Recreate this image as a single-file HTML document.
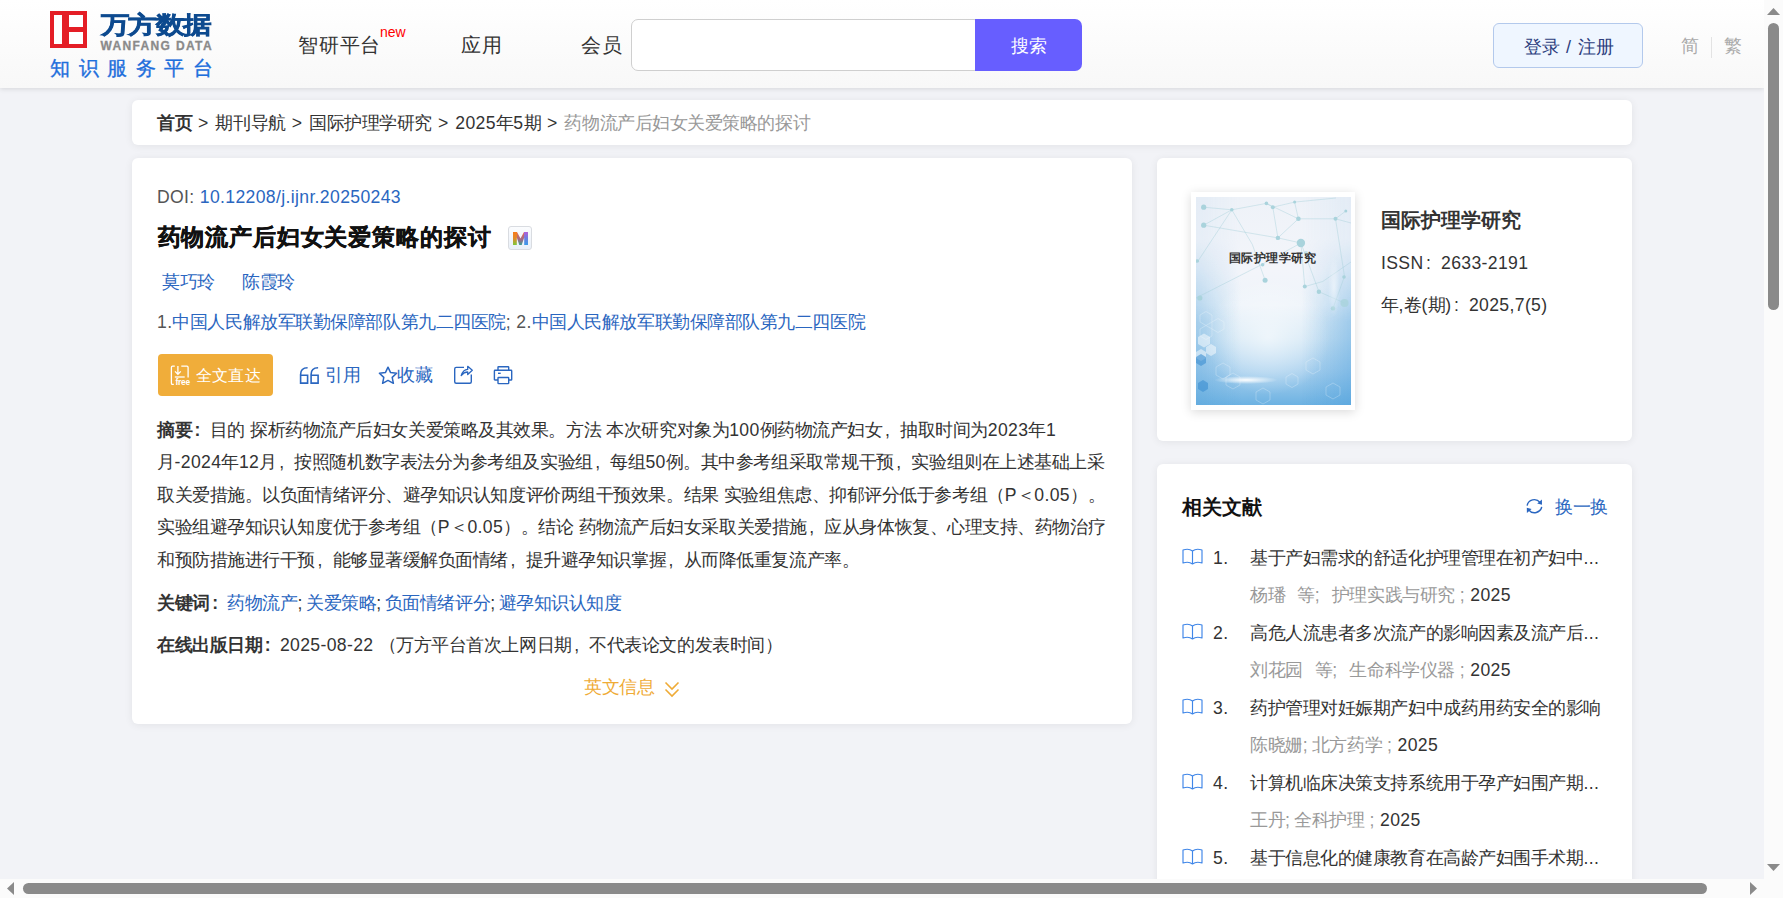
<!DOCTYPE html>
<html><head><meta charset="utf-8"><style>
*{margin:0;padding:0;box-sizing:border-box}
html,body{width:1783px;height:898px;overflow:hidden}
body{font-family:"Liberation Sans",sans-serif;background:#f2f3f7;position:relative;color:#333}
.a{position:absolute;white-space:nowrap}
.t{font-size:17.6px;line-height:22px;letter-spacing:-0.45px}
.l{letter-spacing:0.35px}
.fc{display:inline-block;width:17.6px;padding-left:2.5px;letter-spacing:0}
#hdr{position:absolute;left:0;top:0;width:1764px;height:88px;background:linear-gradient(#ffffff,#f8f8f8);box-shadow:0 1px 5px rgba(0,0,0,0.12);z-index:2}
.card{position:absolute;background:#fff;border-radius:6px;box-shadow:0 1px 8px rgba(0,0,0,0.07)}
.blue{color:#2a66c0}
.grey{color:#999}
#vs{position:absolute;left:1764px;top:0;width:19px;height:879px;background:#fbfbfb;z-index:5}
#hs{position:absolute;left:0;top:879px;width:1783px;height:19px;background:#fbfbfb;z-index:5}
.thumb{position:absolute;background:#8a8a8a;border-radius:6px}
</style></head><body>
<div id="hdr">
<div class="a" style="left:50px;top:11px;width:37px;height:37px;background:#e41e26">
<div class="a" style="left:4px;top:4px;width:8px;height:29px;background:#fff"></div>
<div class="a" style="left:19px;top:4px;width:14px;height:12px;background:#fff"></div>
<div class="a" style="left:19px;top:21px;width:14px;height:12px;background:#fff"></div></div>
<div class="a" style="left:100.5px;top:11px;font-size:28px;line-height:34px;font-weight:bold;color:#0d4a8f;letter-spacing:-0.5px;-webkit-text-stroke:0.7px #0d4a8f;transform:scaleY(0.84);transform-origin:0 0">万方数据</div>
<div class="a" style="left:100.5px;top:38.5px;font-size:12px;line-height:14px;font-weight:bold;color:#8a8a8a;letter-spacing:1.35px;-webkit-text-stroke:0.3px #8a8a8a">WANFANG DATA</div>
<div class="a" style="left:50px;top:56px;font-size:20px;line-height:24px;color:#1e6fdc;letter-spacing:8.5px;-webkit-text-stroke:0.35px #1e6fdc">知识服务平台</div>
<div class="a" style="left:298px;top:34px;font-size:20px;line-height:22px;color:#333;letter-spacing:0.8px">智研平台</div>
<div class="a" style="left:380px;top:24px;font-size:14px;line-height:16px;color:#f00">new</div>
<div class="a" style="left:461px;top:34px;font-size:20px;line-height:22px;color:#333;letter-spacing:0.8px">应用</div>
<div class="a" style="left:581px;top:34px;font-size:20px;line-height:22px;color:#333;letter-spacing:0.8px">会员</div>
<div class="a" style="left:631px;top:19px;width:350px;height:52px;border:1px solid #cfcfcf;border-radius:7px;background:#fff"></div>
<div class="a" style="left:975px;top:19px;width:107px;height:52px;background:#675eff;border-radius:0 7px 7px 0"></div>
<div class="a" style="left:1011px;top:36px;font-size:18px;line-height:20px;color:#fff">搜索</div>
<div class="a" style="left:1493px;top:23px;width:150px;height:45px;border:1px solid #b3c9ec;border-radius:6px;background:#eff6ff"></div>
<div class="a" style="left:1524px;top:37px;font-size:18px;line-height:20px;color:#2d3e7e">登录<span style="letter-spacing:1px"> / </span>注册</div>
<div class="a" style="left:1681px;top:36px;font-size:18px;line-height:20px;color:#aaa">简</div>
<div class="a" style="left:1711px;top:37px;width:1px;height:21px;background:#e3e3e3"></div>
<div class="a" style="left:1724px;top:36px;font-size:18px;line-height:20px;color:#aaa">繁</div>
</div>
<div class="card" style="left:132px;top:100px;width:1500px;height:45px"></div>
<div class="a t" style="left:157px;top:112px;color:#333"><b>首页</b><span style="letter-spacing:1.1px"> &gt; </span>期刊导航<span style="letter-spacing:1.1px"> &gt; </span>国际护理学研究<span style="letter-spacing:1.1px"> &gt; </span><span class="l">2025</span>年<span class="l">5</span>期<span style="letter-spacing:1.1px"> &gt; </span><span style="color:#999">药物流产后妇女关爱策略的探讨</span></div>
<div class="card" style="left:132px;top:158px;width:1000px;height:566px"></div>
<div class="card" style="left:1157px;top:158px;width:475px;height:283px"></div>
<div class="card" style="left:1157px;top:464px;width:475px;height:500px"></div>
<div class="a t" style="left:157px;top:186px;color:#555"><span class="l">DOI: </span><span class="blue"><span class="l">10.12208/j.ijnr.20250243</span></span></div>
<div class="a" style="left:157.5px;top:224px;font-size:23px;line-height:26px;font-weight:bold;color:#111;letter-spacing:0.85px;-webkit-text-stroke:0.35px #111">药物流产后妇女关爱策略的探讨</div>
<div class="a" style="left:508px;top:226px;width:24px;height:24px;border:1.5px solid #d9dce1;border-radius:3px;background:linear-gradient(#fbfcfe,#eaf0f8)">
<svg class="a" style="left:3.5px;top:4.5px" width="15" height="13" viewBox="0 0 15 13">
<defs><clipPath id="mc"><path d="M0,0 H4 L7.5,6.5 L11,0 H15 V13 H11.2 V5.5 L8.7,13 H6.3 L3.8,5.5 V13 H0 Z"/></clipPath>
<linearGradient id="ml" x1="0" y1="0" x2="0" y2="1"><stop offset="0" stop-color="#f77a1a"/><stop offset="0.5" stop-color="#e08a2a"/><stop offset="1" stop-color="#7cc83a"/></linearGradient>
<linearGradient id="mm" x1="0" y1="0" x2="0" y2="1"><stop offset="0" stop-color="#ee6a4a"/><stop offset="0.6" stop-color="#9a6a8a"/><stop offset="1" stop-color="#3f9f90"/></linearGradient>
<linearGradient id="mr" x1="0" y1="0" x2="0" y2="1"><stop offset="0" stop-color="#b25fd8"/><stop offset="0.5" stop-color="#6a7fe0"/><stop offset="1" stop-color="#3a9ae8"/></linearGradient></defs>
<g clip-path="url(#mc)"><rect x="0" y="0" width="4" height="13" fill="url(#ml)"/><rect x="4" y="0" width="7" height="13" fill="url(#mm)"/><rect x="11" y="0" width="4" height="13" fill="url(#mr)"/></g>
</svg></div>
<div class="a t blue" style="left:162px;top:271px">莫巧玲</div>
<div class="a t blue" style="left:242px;top:271px">陈霞玲</div>
<div class="a t" style="left:157px;top:311px;color:#555"><span class="l">1.</span><span class="blue">中国人民解放军联勤保障部队第九二四医院</span><span class="l">; 2.</span><span class="blue">中国人民解放军联勤保障部队第九二四医院</span></div>
<div class="a" style="left:158px;top:354px;width:115px;height:42px;background:#f0ad3a;border-radius:4px"></div>
<svg class="a" style="left:160px;top:355.5px" width="36" height="35" viewBox="0 0 36 35">
<path d="M14.8,10.2 H12.6 Q11.4,10.2 11.4,11.4 V27.2 Q11.4,28.4 12.6,28.4 H13.8" fill="none" stroke="#fff" stroke-width="1.3"/>
<path d="M17.9,10 V18.3 M15,15.4 L17.9,18.3 L20.8,15.4" fill="none" stroke="#fff" stroke-width="1.3"/>
<path d="M21.3,10.2 H26.9 Q28.1,10.2 28.1,11.4 V21.5" fill="none" stroke="#fff" stroke-width="1.3"/>
<path d="M14.8,21 H24.7" stroke="#fff" stroke-width="1.3"/>
<text x="15.4" y="29.2" font-size="8.3" font-family="Liberation Sans" font-weight="bold" fill="#fff" letter-spacing="-0.2">free</text></svg>
<div class="a" style="left:195.5px;top:366px;font-size:16px;line-height:20px;color:#fff;letter-spacing:0.4px">全文直达</div>
<svg class="a" style="left:299px;top:366px" width="21" height="19" viewBox="0 0 21 19"><path d="M8.6,1.8 C4,1.8 1.6,3.8 1.6,8.5 V17.1 H8.6 V9.3 H1.6 M19.1,1.8 C14.5,1.8 12.1,3.8 12.1,8.5 V17.1 H19.1 V9.3 H12.1" fill="none" stroke="#2a66c0" stroke-width="1.6"/></svg>
<div class="a t" style="left:325px;top:364px;color:#2a66c0">引用</div>
<svg class="a" style="left:378px;top:366px" width="20" height="19" viewBox="0 0 20 19">
<path d="M10,1.2 L12.6,6.6 L18.6,7.3 L14.2,11.4 L15.4,17.3 L10,14.4 L4.6,17.3 L5.8,11.4 L1.4,7.3 L7.4,6.6 Z" fill="none" stroke="#2a66c0" stroke-width="1.5" stroke-linejoin="round"/></svg>
<div class="a t" style="left:397px;top:364px;color:#2a66c0">收藏</div>
<svg class="a" style="left:453px;top:365px" width="21" height="20" viewBox="0 0 21 20">
<path d="M11,2.4 H3.2 Q1.7,2.4 1.7,3.9 V16.8 Q1.7,18.3 3.2,18.3 H16.8 Q18.3,18.3 18.3,16.8 V9.5" fill="none" stroke="#2a66c0" stroke-width="1.4"/>
<path d="M8.2,10.6 C9.5,6.5 11.5,4.6 14.7,4.4 V1.3 L19.3,5.3 L14.7,9.5 V7 C12,7 10,8.3 8.2,10.6 Z" fill="none" stroke="#2a66c0" stroke-width="1.3" stroke-linejoin="round"/></svg>
<svg class="a" style="left:492px;top:365px" width="22" height="20" viewBox="0 0 22 20">
<path d="M6,5.3 V2.3 Q6,1.7 6.6,1.7 H16.1 Q16.7,1.7 16.7,2.3 V5.3" fill="none" stroke="#2a66c0" stroke-width="1.4"/>
<path d="M6,15 H3 Q2.4,15 2.4,14.4 V5.9 Q2.4,5.3 3,5.3 H19.1 Q19.7,5.3 19.7,5.9 V14.4 Q19.7,15 19.1,15 H16.7" fill="none" stroke="#2a66c0" stroke-width="1.4"/>
<rect x="6" y="12.5" width="10.7" height="6.1" rx="0.6" fill="none" stroke="#2a66c0" stroke-width="1.4"/>
<path d="M6,8.3 H8.7" stroke="#2a66c0" stroke-width="1.4"/></svg>
<div class="a t" style="left:157px;top:419.0px;color:#333"><b>摘要<span class="fc">:</span></b>目的<span class="l"> </span>探析药物流产后妇女关爱策略及其效果。方法<span class="l"> </span>本次研究对象为<span class="l">100</span>例药物流产妇女<span class="fc">,</span>抽取时间为<span class="l">2023</span>年<span class="l">1</span></div>
<div class="a t" style="left:157px;top:451.4px;color:#333">月<span class="l">-2024</span>年<span class="l">12</span>月<span class="fc">,</span>按照随机数字表法分为参考组及实验组<span class="fc">,</span>每组<span class="l">50</span>例。其中参考组采取常规干预<span class="fc">,</span>实验组则在上述基础上采</div>
<div class="a t" style="left:157px;top:483.8px;color:#333">取关爱措施。以负面情绪评分、避孕知识认知度评价两组干预效果。结果<span class="l"> </span>实验组焦虑、抑郁评分低于参考组（<span class="l">P</span>＜<span class="l">0.05</span>）。</div>
<div class="a t" style="left:157px;top:516.2px;color:#333">实验组避孕知识认知度优于参考组（<span class="l">P</span>＜<span class="l">0.05</span>）。结论<span class="l"> </span>药物流产后妇女采取关爱措施<span class="fc">,</span>应从身体恢复、心理支持、药物治疗</div>
<div class="a t" style="left:157px;top:548.6px;color:#333">和预防措施进行干预<span class="fc">,</span>能够显著缓解负面情绪<span class="fc">,</span>提升避孕知识掌握<span class="fc">,</span>从而降低重复流产率。</div>
<div class="a t" style="left:157px;top:592px;color:#333"><b>关键词<span class="fc">:</span></b><span class="blue">药物流产</span><span style="letter-spacing:-0.6px">; </span><span class="blue">关爱策略</span><span style="letter-spacing:-0.6px">; </span><span class="blue">负面情绪评分</span><span style="letter-spacing:-0.6px">; </span><span class="blue">避孕知识认知度</span></div>
<div class="a t" style="left:157px;top:634px;color:#333"><b>在线出版日期<span class="fc">:</span></b><span class="l">2025-08-22 </span>（万方平台首次上网日期<span class="fc">,</span>不代表论文的发表时间）</div>
<div class="a t" style="left:584px;top:676px;color:#efab36">英文信息</div>
<svg class="a" style="left:664px;top:681px" width="16" height="17" viewBox="0 0 16 17">
<path d="M1.5,1.5 L8,8 L14.5,1.5 M1.5,8.5 L8,15 L14.5,8.5" fill="none" stroke="#efab36" stroke-width="1.6"/></svg>
<div class="a" style="left:1191px;top:192px;width:164px;height:218px;background:#fff;box-shadow:0 2px 10px rgba(0,0,0,0.15)"></div>
<div class="a" style="left:1196px;top:197px;width:155px;height:208px;overflow:hidden;background:linear-gradient(180deg,#eef2f8 0%,#f3f5fa 35%,#eef4fa 52%,#d3e7f5 68%,#a8d0ee 84%,#6db2e2 100%)">
<svg class="a" style="left:0;top:0" width="155" height="208" viewBox="0 0 155 208">
<defs>
<radialGradient id="cg" cx="0.5" cy="0.5" r="0.5"><stop offset="0" stop-color="#ffffff" stop-opacity="0.6"/><stop offset="1" stop-color="#ffffff" stop-opacity="0"/></radialGradient>
<linearGradient id="cr" x1="0" y1="0" x2="1" y2="0"><stop offset="0" stop-color="#4d9fdc" stop-opacity="0"/><stop offset="1" stop-color="#4d9fdc" stop-opacity="0.45"/></linearGradient>
<linearGradient id="cl" x1="0" y1="0" x2="1" y2="0"><stop offset="0" stop-color="#5aa6dc" stop-opacity="0.45"/><stop offset="1" stop-color="#5aa6dc" stop-opacity="0"/></linearGradient>
<linearGradient id="vg" x1="0" y1="0" x2="0" y2="1"><stop offset="0.2" stop-color="#fff" stop-opacity="0.15"/><stop offset="0.6" stop-color="#fff" stop-opacity="1"/></linearGradient>
<radialGradient id="gl" cx="0.5" cy="0.5" r="0.5"><stop offset="0" stop-color="#ffffff" stop-opacity="1"/><stop offset="1" stop-color="#ffffff" stop-opacity="0"/></radialGradient>
</defs>
<mask id="mk"><rect x="0" y="0" width="155" height="208" fill="url(#vg)"/></mask>
<g mask="url(#mk)"><rect x="0" y="0" width="45" height="208" fill="url(#cl)"/><rect x="105" y="0" width="50" height="208" fill="url(#cr)"/></g>
<ellipse cx="72" cy="140" rx="62" ry="58" fill="url(#cg)"/>
<g stroke="#a3cfd9" stroke-width="0.6" fill="none" opacity="0.7">
<path d="M7.7,10.2 L35.8,12.8 L70.4,6.4 L76.8,10.2 L98.6,5.1 L140,1 M7.7,28.2 L35.8,12.8 L56.3,47.4 M7.7,28.2 L81.9,40.9 L104.9,46 M102.4,21.8 L139.5,21.8 L155,26 M102.4,21.8 L81.9,40.9 M70.4,6.4 L102.4,21.8 L98.6,5.1 M0,101 L65.3,67.8 L104.9,46 L108.8,89.6 L126.7,84.5 L155,65 M139.5,21.8 L148.5,79.4 L137,111.4 M104.9,46 L122.9,94.7 M76.8,10.2 L81.9,40.9 M35.8,12.8 L2,64 M56.3,47.4 L69.1,83.2 M122.9,94.7 L148.5,106 M139.5,21.8 L149.8,14"/>
</g>
<g fill="#a9d3dc">
<circle cx="7.7" cy="10.2" r="2.6"/><circle cx="7.7" cy="28.2" r="2.6"/><circle cx="35.8" cy="12.8" r="1.8"/><circle cx="70.4" cy="6.4" r="1.8"/><circle cx="76.8" cy="10.2" r="2"/><circle cx="98.6" cy="5.1" r="1.5"/><circle cx="102.4" cy="21.8" r="2.3"/><circle cx="81.9" cy="40.9" r="2.2"/><circle cx="104.9" cy="46" r="4.2"/><circle cx="139.5" cy="21.8" r="2"/><circle cx="148.5" cy="106" r="4" opacity="0.8"/><circle cx="137" cy="111.4" r="2.2"/><circle cx="122.9" cy="94.7" r="2.2"/><circle cx="108.8" cy="89.6" r="2"/><circle cx="69.1" cy="83.2" r="2.5"/><circle cx="3.8" cy="101" r="2.6"/><circle cx="1.3" cy="64" r="1.8"/><circle cx="66.6" cy="67.8" r="1.8"/><circle cx="149.8" cy="14" r="1.5"/><circle cx="148" cy="80" r="1.8"/><circle cx="110" cy="56" r="2" opacity="0.6"/>
</g>
<g stroke="#ffffff" stroke-width="0.7" fill="none" opacity="0.35">
<path d="M4,118 l6,-3.5 6,3.5 0,7 -6,3.5 -6,-3.5z M16,125 l6,-3.5 6,3.5 0,7 -6,3.5 -6,-3.5z M4,132 l6,-3.5 6,3.5 0,7 -6,3.5 -6,-3.5z M20,170 l7,-4 7,4 0,8 -7,4 -7,-4z M30,180 l7,-4 7,4 0,8 -7,4 -7,-4z M110,165 l7,-4 7,4 0,8 -7,4 -7,-4z M90,180 l6,-3.5 6,3.5 0,7 -6,3.5 -6,-3.5z M130,190 l7,-4 7,4 0,8 -7,4 -7,-4z M60,195 l7,-4 7,4 0,8 -7,4 -7,-4z"/>
</g>
<g fill="#ffffff" opacity="0.5">
<path d="M2,140 l6,-3.5 6,3.5 0,7 -6,3.5 -6,-3.5z"/><path d="M10,150 l5,-3 5,3 0,6 -5,3 -5,-3z"/><path d="M0,155 l5,-3 5,3 0,6 -5,3 -5,-3z"/>
</g>
<g fill="#3c8fd2" opacity="0.6"><path d="M0,160 l5,-3 5,3 0,6 -5,3 -5,-3z"/><path d="M2,186 l5,-3 5,3 0,6 -5,3 -5,-3z"/></g>
<ellipse cx="50" cy="183" rx="32" ry="4" fill="url(#gl)"/>
<ellipse cx="138" cy="90" rx="6" ry="30" fill="url(#gl)" opacity="0.5"/>
</svg>
<div class="a" style="left:33px;top:54px;font-size:12px;line-height:14px;font-weight:bold;color:#333;letter-spacing:0.45px">国际护理学研究</div></div>
<div class="a" style="left:1381px;top:209px;font-size:20px;line-height:22px;font-weight:bold;color:#333">国际护理学研究</div>
<div class="a t" style="left:1381px;top:252px;color:#333"><span class="l">ISSN</span><span class="fc">:</span><span class="l">2633-2191</span></div>
<div class="a t" style="left:1381px;top:294px;color:#333">年<span class="l">,</span>卷<span class="l">(</span>期<span class="l">)</span><span class="fc">:</span><span class="l">2025,7(5)</span></div>
<div class="a" style="left:1182px;top:496px;font-size:20px;line-height:22px;font-weight:bold;color:#111">相关文献</div>
<svg class="a" style="left:1525px;top:497px" width="19" height="19" viewBox="0 0 19 19">
<path d="M2.1,8.6 A7.3,7.3 0 0 1 15,5.4 M16.7,9.8 A7.3,7.3 0 0 1 3.8,13" fill="none" stroke="#2a66c0" stroke-width="1.4"/>
<path d="M16.9,2.6 L17,7.8 L12.2,6.6 Z M1.9,16 L1.8,10.8 L6.6,12 Z" fill="#2a66c0"/></svg>
<div class="a t" style="left:1555px;top:496px;color:#2a66c0">换一换</div>
<svg class="a" style="left:1182px;top:548px" width="21" height="17" viewBox="0 0 21 17"><path d="M10.5,3 C8,1 4,1 1,2 V15 C4,14 8,14 10.5,16 C13,14 17,14 20,15 V2 C17,1 13,1 10.5,3 Z M10.5,3 V16" fill="none" stroke="#3f86e8" stroke-width="1.15" stroke-linejoin="round"/></svg>
<div class="a t" style="left:1213px;top:547px;color:#333"><span class="l">1.</span></div>
<div class="a t" style="left:1250px;top:547px;color:#333">基于产妇需求的舒适化护理管理在初产妇中<span class="l">...</span></div>
<div class="a t" style="left:1250px;top:584px;color:#333"><span class="grey">杨璠</span><span class="grey" style="margin-left:12px">等<span class="l">;</span></span><span class="grey" style="margin-left:12px">护理实践与研究</span><span class="grey" style="margin-left:5px"><span class="l">;</span></span><span class="l"> 2025</span></div>
<svg class="a" style="left:1182px;top:623px" width="21" height="17" viewBox="0 0 21 17"><path d="M10.5,3 C8,1 4,1 1,2 V15 C4,14 8,14 10.5,16 C13,14 17,14 20,15 V2 C17,1 13,1 10.5,3 Z M10.5,3 V16" fill="none" stroke="#3f86e8" stroke-width="1.15" stroke-linejoin="round"/></svg>
<div class="a t" style="left:1213px;top:622px;color:#333"><span class="l">2.</span></div>
<div class="a t" style="left:1250px;top:622px;color:#333">高危人流患者多次流产的影响因素及流产后<span class="l">...</span></div>
<div class="a t" style="left:1250px;top:659px;color:#333"><span class="grey">刘花园</span><span class="grey" style="margin-left:12px">等<span class="l">;</span></span><span class="grey" style="margin-left:12px">生命科学仪器</span><span class="grey" style="margin-left:5px"><span class="l">;</span></span><span class="l"> 2025</span></div>
<svg class="a" style="left:1182px;top:698px" width="21" height="17" viewBox="0 0 21 17"><path d="M10.5,3 C8,1 4,1 1,2 V15 C4,14 8,14 10.5,16 C13,14 17,14 20,15 V2 C17,1 13,1 10.5,3 Z M10.5,3 V16" fill="none" stroke="#3f86e8" stroke-width="1.15" stroke-linejoin="round"/></svg>
<div class="a t" style="left:1213px;top:697px;color:#333"><span class="l">3.</span></div>
<div class="a t" style="left:1250px;top:697px;color:#333">药护管理对妊娠期产妇中成药用药安全的影响</div>
<div class="a t" style="left:1250px;top:734px;color:#333"><span class="grey">陈晓姗<span class="l">;</span></span><span class="grey" style="margin-left:4px">北方药学</span><span class="grey" style="margin-left:5px"><span class="l">;</span></span><span class="l"> 2025</span></div>
<svg class="a" style="left:1182px;top:773px" width="21" height="17" viewBox="0 0 21 17"><path d="M10.5,3 C8,1 4,1 1,2 V15 C4,14 8,14 10.5,16 C13,14 17,14 20,15 V2 C17,1 13,1 10.5,3 Z M10.5,3 V16" fill="none" stroke="#3f86e8" stroke-width="1.15" stroke-linejoin="round"/></svg>
<div class="a t" style="left:1213px;top:772px;color:#333"><span class="l">4.</span></div>
<div class="a t" style="left:1250px;top:772px;color:#333">计算机临床决策支持系统用于孕产妇围产期<span class="l">...</span></div>
<div class="a t" style="left:1250px;top:809px;color:#333"><span class="grey">王丹<span class="l">;</span></span><span class="grey" style="margin-left:4px">全科护理</span><span class="grey" style="margin-left:5px"><span class="l">;</span></span><span class="l"> 2025</span></div>
<svg class="a" style="left:1182px;top:848px" width="21" height="17" viewBox="0 0 21 17"><path d="M10.5,3 C8,1 4,1 1,2 V15 C4,14 8,14 10.5,16 C13,14 17,14 20,15 V2 C17,1 13,1 10.5,3 Z M10.5,3 V16" fill="none" stroke="#3f86e8" stroke-width="1.15" stroke-linejoin="round"/></svg>
<div class="a t" style="left:1213px;top:847px;color:#333"><span class="l">5.</span></div>
<div class="a t" style="left:1250px;top:847px;color:#333">基于信息化的健康教育在高龄产妇围手术期<span class="l">...</span></div>
<div id="vs"><svg class="a" style="left:0;top:0" width="19" height="879"><polygon points="3,15 16,15 9.5,8" fill="#8a8a8a"/><polygon points="3,864 16,864 9.5,871" fill="#8a8a8a"/></svg>
<div class="thumb" style="left:4px;top:23px;width:11px;height:287px"></div></div>
<div id="hs"><svg class="a" style="left:0;top:0" width="1783" height="19"><polygon points="14,3 14,16 7,9.5" fill="#8a8a8a"/><polygon points="1750,3 1750,16 1757,9.5" fill="#8a8a8a"/></svg>
<div class="thumb" style="left:23px;top:4px;width:1684px;height:11px"></div></div>
</body></html>
